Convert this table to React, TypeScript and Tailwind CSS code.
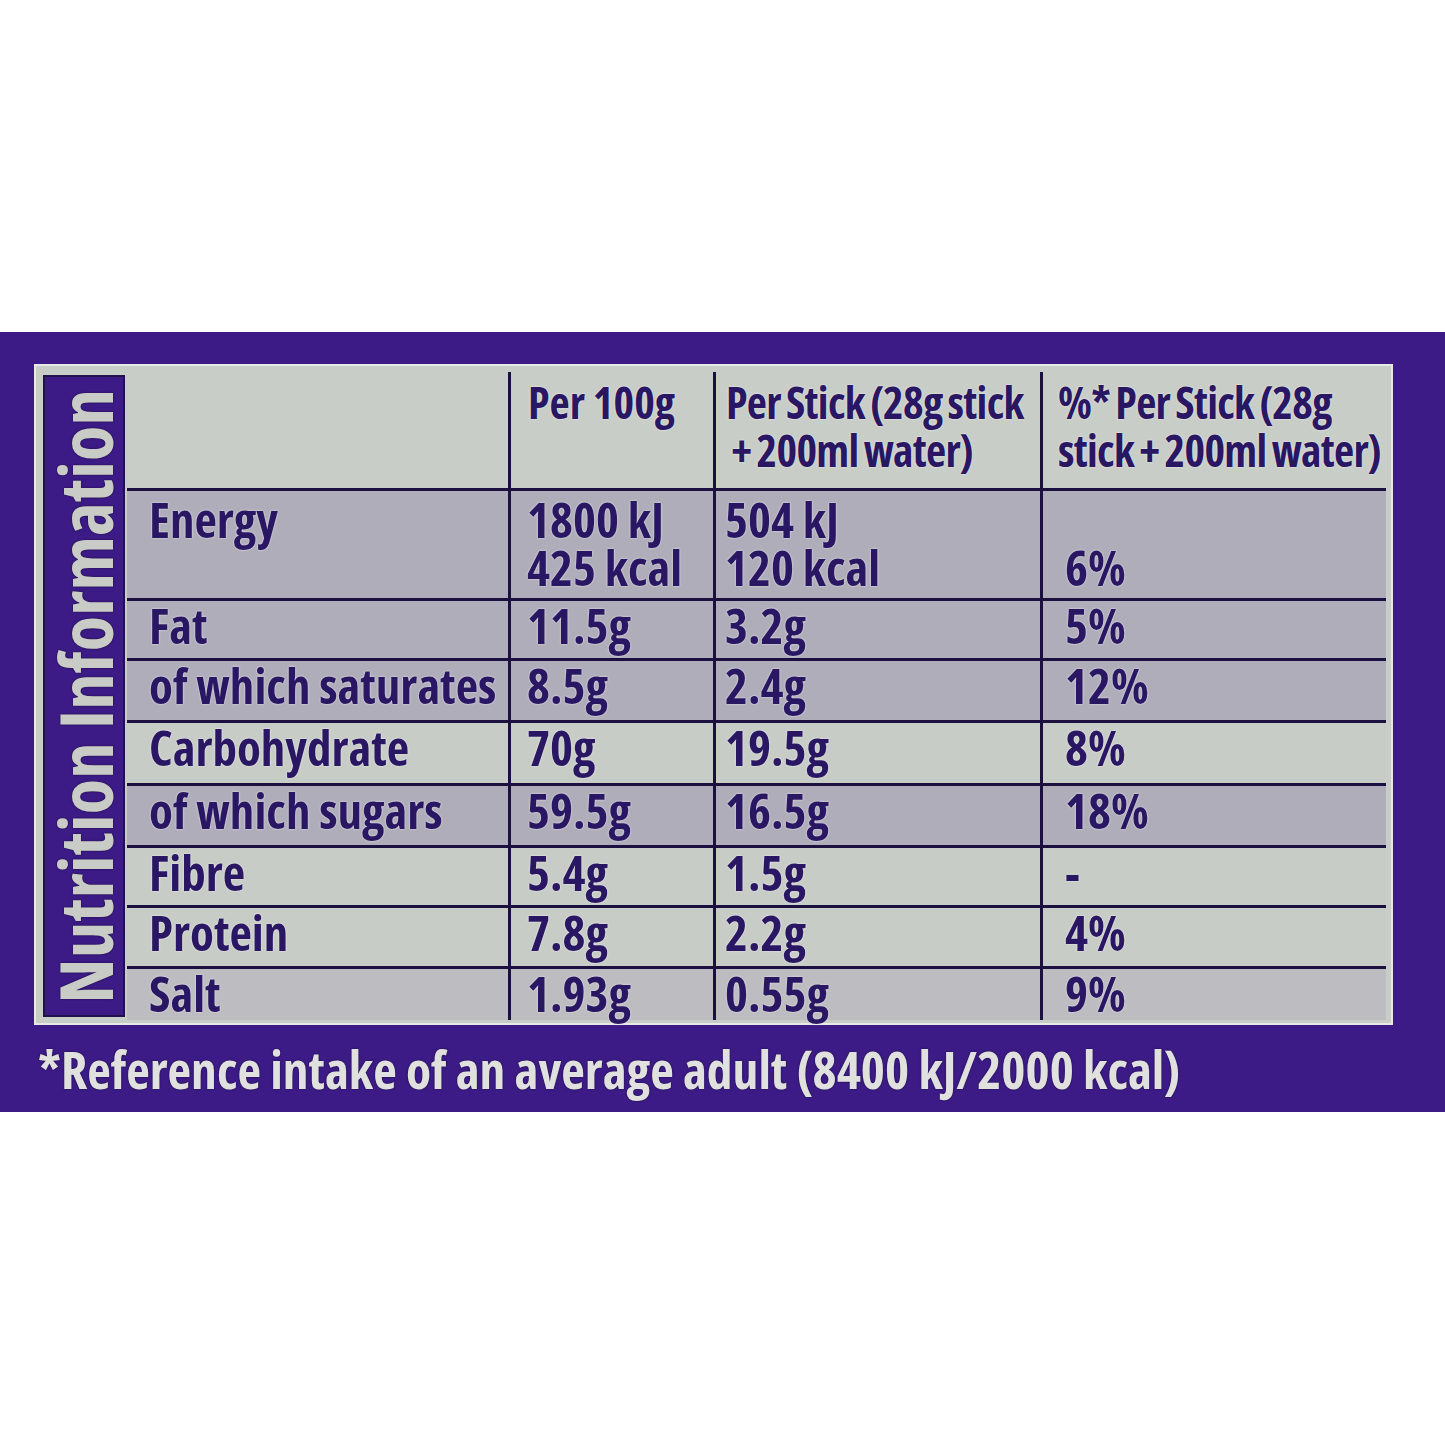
const rows = [
  { label: 'Energy', a: ['1800 kJ', '425 kcal'], b: ['504 kJ', '120 kcal'], c: ['', '6%'], bg: 'bg-[#b0adbb]', h: 'h-[110px]' },
  { label: 'Fat', a: ['11.5g'], b: ['3.2g'], c: ['5%'], bg: 'bg-[#b0adbb]', h: 'h-[60px]' },
  { label: 'of which saturates', a: ['8.5g'], b: ['2.4g'], c: ['12%'], bg: 'bg-[#b0adbb]', h: 'h-[62px]' },
  { label: 'Carbohydrate', a: ['70g'], b: ['19.5g'], c: ['8%'], bg: 'bg-[#c8ccc6]', h: 'h-[63px]' },
  { label: 'of which sugars', a: ['59.5g'], b: ['16.5g'], c: ['18%'], bg: 'bg-[#b0adbb]', h: 'h-[62px]' },
  { label: 'Fibre', a: ['5.4g'], b: ['1.5g'], c: ['-'], bg: 'bg-[#c8ccc6]', h: 'h-[60px]' },
  { label: 'Protein', a: ['7.8g'], b: ['2.2g'], c: ['4%'], bg: 'bg-[#c8ccc6]', h: 'h-[61px]' },
  { label: 'Salt', a: ['1.93g'], b: ['0.55g'], c: ['9%'], bg: 'bg-[#bcbcc1]', h: 'h-[54px]' },
];

const cols = 'grid grid-cols-[384px_205px_327px_343px]';

function Cell({ items, className }: { items: string[]; className: string }) {
  return (
    <div className={className}>
      {items.map((t, i) => (
        <div key={i} className="h-[48px] whitespace-nowrap">
          {t}
        </div>
      ))}
    </div>
  );
}

export default function App() {
  return (
    <div className="w-[1445px] h-[1445px] bg-white font-['Open_Sans','Liberation_Sans',sans-serif] [font-stretch:75%] font-bold">
      <div className="h-[332px]" />
      <div className="bg-[#3c1b86] pt-[32px] pb-[13px] pl-[34px]">
        <div className="flex w-[1359px] h-[661px] bg-[#c9cdc7] border-2 border-[#e6e9e4] pt-[6px] pl-[7px] pr-[5px] pb-[3px]">
          <div className="w-[82px] my-[3px] bg-[#3c1b86] border-2 border-[#22114d] flex items-center justify-center">
            <div className="[writing-mode:vertical-rl] rotate-180 text-[#c9ccc6] text-[73px] leading-none whitespace-nowrap [text-shadow:0_0_2px_#150a33]">
              Nutrition Information
            </div>
          </div>
          <div className="ml-[2px] w-[1259px] text-[#2a1763] text-[49px] leading-[48px] [text-shadow:0_0_2px_#f4f4f4]">
            <div className={`${cols} h-[116px] bg-[#c9cdc7] text-[44px] tracking-[-0.7px] [word-spacing:-2px]`}>
              <div className="border-r-[3px] border-[#1c1040]" />
              <div className="border-r-[3px] border-[#1c1040] pl-[17px] pt-[6px] whitespace-nowrap tracking-[0px] [word-spacing:0px]">
                Per 100g
              </div>
              <div className="border-r-[3px] border-[#1c1040] pl-[10px] pt-[6px] whitespace-nowrap">
                <div>Per Stick (28g stick</div>
                <div>&nbsp;+ 200ml water)</div>
              </div>
              <div className="pl-[15px] pt-[6px] whitespace-nowrap">
                <div>%* Per Stick (28g</div>
                <div>stick + 200ml water)</div>
              </div>
            </div>
            {rows.map((r, i) => (
              <div key={r.label} className={`${cols} ${r.h} ${r.bg} border-t-[3px] border-[#1c1040]`}>
                <div className={`border-r-[3px] border-[#1c1040] pl-[22px] whitespace-nowrap ${i === 0 ? 'pt-[4px]' : ''}`}>
                  {r.label}
                </div>
                <Cell items={r.a} className={`border-r-[3px] border-[#1c1040] pl-[16px] ${i === 0 ? 'pt-[4px]' : ''}`} />
                <Cell items={r.b} className={`border-r-[3px] border-[#1c1040] pl-[9px] ${i === 0 ? 'pt-[4px]' : ''}`} />
                <Cell items={r.c} className={`pl-[22px] ${i === 0 ? 'pt-[4px]' : ''}`} />
              </div>
            ))}
          </div>
        </div>
        <div className="mt-[14px] pl-[4px] h-[60px] text-[#e0e1de] text-[51.5px] leading-[60px] whitespace-nowrap [text-shadow:0_0_2px_#150a33]">
          *Reference intake of an average adult (8400 kJ/2000 kcal)
        </div>
      </div>
    </div>
  );
}
